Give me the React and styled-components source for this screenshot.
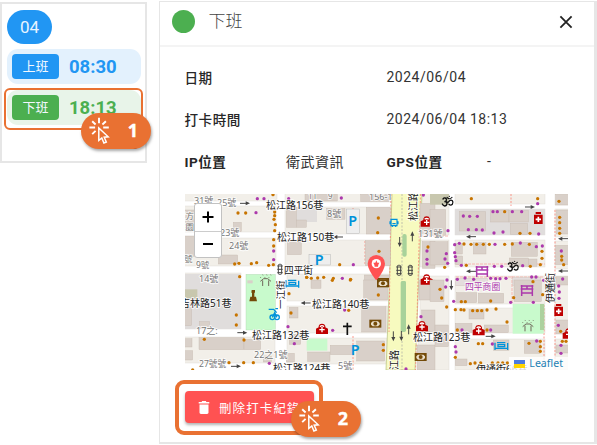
import React from "react";
import styled, { createGlobalStyle } from "styled-components";

const sans = `Roboto, "Noto Sans CJK TC", sans-serif`;

const Global = createGlobalStyle`
  * { box-sizing: border-box; }
  body { margin: 0; background: #fff; font-family: ${sans}; color: #272727; overflow: hidden; }
`;

const Page = styled.main`
  display: flex;
  align-items: flex-start;
  gap: 12px;
  width: 597px;
  height: 445px;
`;

const DayCard = styled.section`
  position: relative;
  width: 147px;
  height: 161px;
  margin-top: 2px;
  padding: 6px 4px 0 5px;
  border: 2px solid #e6e6e6;
  display: flex;
  flex-direction: column;
`;

const DayBadge = styled.div`
  width: 45px;
  height: 34px;
  border-radius: 17px;
  background: #2196f3;
  color: #e8f4ff;
  font-size: 17px;
  line-height: 34px;
  text-align: center;
`;

const PunchRow = styled.div`
  display: flex;
  align-items: center;
  height: 35px;
  margin-top: ${(p) => p.$gap}px;
  padding-left: 5px;
  gap: 10px;
  border-radius: 11px;
  background: ${(p) => p.$tint};
  color: ${(p) => p.$color};
`;

const PunchTag = styled.span`
  width: 47px;
  height: 25px;
  border-radius: 4px;
  background: ${(p) => p.$color};
  color: #f2f8ff;
  font-size: 13px;
  line-height: 25px;
  text-align: center;
`;

const PunchTime = styled.span`
  font-size: 18.5px;
  font-weight: 700;
  line-height: 24px;
`;

const Total = styled.div`
  margin: 8px 2px 0 0;
  text-align: right;
  font-size: 17px;
  line-height: 20px;
`;

const Highlight = styled.div`
  position: absolute;
  left: ${(p) => p.$x}px;
  top: ${(p) => p.$y}px;
  width: ${(p) => p.$w}px;
  height: ${(p) => p.$h}px;
  border: ${(p) => p.$line}px solid #e97132;
  border-radius: ${(p) => p.$r}px;
`;

const Callout = styled.div`
  position: absolute;
  left: ${(p) => p.$x}px;
  top: ${(p) => p.$y}px;
  width: 70px;
  height: 36px;
  padding: 0 13px 0 8px;
  border-radius: 18px;
  background: #e97132;
  color: #fff;
  display: flex;
  align-items: center;
  justify-content: space-between;
  font: 700 18px "Open Sans", sans-serif;
  box-shadow: 1px 2px 3px rgba(0, 0, 0, 0.35);
  svg { margin-top: -2px; }
`;

const CalloutNumber = styled.span`
  margin-top: -2px;
  -webkit-text-stroke: 0.4px #fff;
`;

const Dialog = styled.section`
  position: relative;
  width: 438px;
  height: 443px;
  margin-top: 1px;
  border: 2px solid #e6e6e6;
  border-top-width: 1px;
  border-left-width: 1px;
  border-right-width: 3px;
`;

const DialogHeader = styled.header`
  display: flex;
  align-items: center;
  height: 45px;
  padding: 0 21px 4px 12px;
  border-bottom: 2px solid #f4f4f4;
`;

const StatusDot = styled.span`
  width: 23px;
  height: 23px;
  border-radius: 50%;
  background: #4caf50;
`;

const Title = styled.h1`
  flex: 1;
  margin: -2px 0 0 13.5px;
  font-size: 17px;
  font-weight: 300;
  line-height: 24px;
  color: #444;
`;

const Fields = styled.dl`
  display: grid;
  grid-template-columns: 101.5px 100.5px 100.5px 1fr;
  grid-auto-rows: 42px;
  align-items: center;
  margin: 0;
  padding: 9px 0 0 24.5px;
  font-size: 14px;
  letter-spacing: 0.5px;
`;

const Label = styled.dt`
  font-size: 13.6px;
  font-weight: ${(p) => (p.$strong ? 700 : 500)};
`;

const Value = styled.dd`
  margin: 0;
  grid-column: ${(p) => (p.$wide ? "3 / 5" : "auto")};
  color: #333;
`;

const MapFrame = styled.div`
  width: 383px;
  height: 176px;
  margin: 12px 0 0 25px;
  overflow: hidden;
  svg { display: block; }
`;

const MapView = styled.div`
  position: relative;
  width: 383px;
  height: 176px;
`;

const ZoomControl = styled.div`
  position: absolute;
  left: 9px;
  top: 9px;
  width: 28px;
  height: 55px;
  border: 1px solid #c2c2c2;
  border-radius: 3px;
  background: #fff;
  display: grid;
  grid-template-rows: 1fr 1fr;
`;

const ZoomButton = styled.button`
  display: grid;
  place-items: center;
  padding: 0;
  border: 0;
  background: none;
  & + & { border-top: 1px solid #ccc; }
`;

const Attribution = styled.div`
  position: absolute;
  right: 0;
  bottom: 0;
  height: 13px;
  padding: 0 5px;
  display: flex;
  align-items: center;
  gap: 4px;
  background: rgba(255, 255, 255, 0.8);
  color: #2381b4;
  font: 10.6px/13px "Noto Sans", sans-serif;
`;

const DeleteButton = styled.button`
  display: flex;
  align-items: center;
  gap: 8px;
  width: 129px;
  height: 32px;
  margin: 21px 0 0 25px;
  padding: 0 0 0 12px;
  border: 0;
  border-radius: 4px;
  background: #ff5252;
  color: #fff;
  font: 400 12.5px ${sans};
  letter-spacing: 1.1px;
  white-space: nowrap;
  overflow: hidden;
  box-shadow: 0 2px 3px rgba(0, 0, 0, 0.3);
`;

const ClickIcon = () => (
  <svg width="22" height="27" viewBox="0 0 22 27" fill="none" stroke="#fff">
    <path d="M10 .8v5.5M3.2 4.2l3.4 3.3M16.9 4.2l-3.5 3.3M.4 10.5h5.7M14.2 10.5h5.6M3.2 17.2l3.4-3.4" strokeWidth="1.9" />
    <path d="M9.8 10.9v12.6l3-2.5 2.1 5 2.4-1-2.1-4.8 4-.4z" strokeWidth="1.5" />
  </svg>
);

const BIN = "M5.6 2h1l.6-1h3.6l.6 1h2.9v1.6H3.7V2zM4.5 4.6h9v8c0 .9-.6 1.4-1.4 1.4H5.9c-.8 0-1.4-.5-1.4-1.4z";

/* Street map: every tile is drawn at three units per map pixel. */
const Tile = ({ x, y, children }) => (
  <g transform={`translate(${x} ${y}) scale(.33333)`}>{children}</g>
);

const Rects = ({ list, ...rest }) => (
  <g {...rest}>
    {list.map(([x, y, w, h], i) => <rect key={i} x={x} y={y} width={w} height={h} />)}
  </g>
);

const Dots = ({ list, purple }) => (
  <g fill={purple ? "#ac39ac" : "#c77400"}>
    {list.map(([x, y], i) => <circle key={i} cx={x} cy={y} r="4.9" />)}
  </g>
);

const T = ({ x, y, size = 10, fill = "#222", rotate, halo = 1.8, children, ...rest }) => (
  <text
    x={x} y={y} fontSize={size} fill={fill} stroke="#fff" strokeWidth={halo} strokeOpacity=".75"
    paintOrder="stroke" fontFamily='"Noto Sans", "Noto Sans CJK TC", sans-serif'
    transform={rotate ? `rotate(${rotate} ${x} ${y})` : undefined} {...rest}
  >{children}</text>
);

const Arrow = ({ x, y, r = 0, len = 30 }) => (
  <g transform={`translate(${x} ${y}) rotate(${r})`}>
    <path d={`M${-len / 2} 0H${len / 2 - 8}`} stroke="#444" strokeWidth="3" />
    <path d={`M${len / 2} 0l-13-6v12z`} fill="#444" />
  </g>
);

const Clinic = ({ x, y }) => (
  <g transform={`translate(${x} ${y})`}>
    <path d="M-18 16V0L-10-4V-8Q-8-15 0-15T10-8V-4L18 0V16z" fill="#bf0000" />
    <path d="M-6-6Q0-12 6-6M0-5V11M-8 3H8" stroke="#fff" strokeWidth="4" fill="none" />
  </g>
);

const Pharmacy = ({ x, y }) => (
  <g transform={`translate(${x} ${y})`}>
    <path d="M-8-18H8v6H-8zM-13-10h26v28h-26z" fill="#bf0000" />
    <path d="M0-4v16M-8 4H8" stroke="#fff" strokeWidth="5" />
  </g>
);

const Bank = ({ x, y }) => (
  <g transform={`translate(${x} ${y})`}>
    <rect x="-18" y="-12" width="36" height="24" fill="#734a08" />
    <path d="M-13-2l5-5H8l5 5V3L8 8H-8l-5-5z" fill="#eadfca" />
    <circle r="6" fill="#734a08" />
  </g>
);

const Gate = ({ x, y }) => (
  <path transform={`translate(${x} ${y})`} d="M-16-17V16M16-17V16M-19-14H19M-19-5H19M-14 7H14M0-14V-5" stroke="#ac39ac" strokeWidth="4.5" fill="none" />
);

const Bed = ({ x, y }) => (
  <path transform={`translate(${x} ${y})`} d="M-19-11V11M-19 6H19M19-10V11M-10-5h20v6h-20zM-13-11h25" stroke="#0092da" strokeWidth="4" fill="none" />
);

const Signal = ({ x, y }) => (
  <g transform={`translate(${x} ${y})`} fill="none" stroke="#444" strokeWidth="3">
    <rect x="-5" y="-15" width="10" height="30" rx="3" /><path d="M-8-10H8M-8 0H8M-8 10H8" />
  </g>
);

const Shelter = ({ x, y }) => (
  <g transform={`translate(${x} ${y})`} stroke="#70675b" strokeWidth="3" fill="none">
    <path d="M-16 2L-6-6H6L16 2M-9-1V16M9-1V16" />
    <path d="M-16-11l1 2M-9-18l1 2M-3-11l1 2M3-18l1 2M9-11l1 2M15-18l1 2" />
  </g>
);

const Om = ({ x, y }) => (
  <g transform={`translate(${x} ${y})`} stroke="#111" strokeWidth="4" fill="none" strokeLinecap="round">
    <path d="M-14-8Q-11-12-8-11Q-2-9-4-4Q-6 0-10 0Q-2 0-2 6Q-3 13-9 13Q-14 12-16 7" />
    <path d="M-4 0Q1 4 4-1Q9-7 14-3Q18 2 14 8Q9 13 4 8" />
    <path d="M-2-13Q5-5 13-13M5-16v.5" strokeWidth="3.2" />
  </g>
);

const StreetMap = () => (
  <svg width="383" height="176" viewBox="185 194 383 176">
    <rect x="185" y="194" width="383" height="176" fill="#fff" />
    <Rects fill="#f2efe9" stroke="#ddd8d0" strokeWidth=".4" list={[
      [184, 193, 93, 8], [184, 206, 92, 26], [184, 238, 92, 28], [184, 273, 57, 27], [184, 300, 57, 29],
      [184, 337, 91, 26], [285, 193, 107, 9], [285, 207, 107, 27], [285, 240, 107, 26], [287, 274, 103, 27],
      [287, 306, 101, 27], [287, 338, 100, 26], [421, 193, 28, 42], [420, 240, 29, 27], [420, 276, 29, 57],
      [418, 339, 31, 31], [455, 193, 90, 11], [455, 209, 90, 26], [455, 240, 90, 27], [455, 276, 90, 28],
      [455, 308, 90, 25], [455, 339, 90, 31], [555, 193, 14, 12], [555, 209, 14, 28], [555, 241, 14, 28],
      [555, 276, 14, 57], [555, 339, 14, 31],
    ]} />
    <Rects fill="#e0dddc" list={[[185, 274, 56, 55], [455, 209, 90, 26], [287, 207, 30, 15]]} />
    <path d="M392 193h30q-3 85-7 177h-29q4-90 6-177z" fill="#f7fabf" stroke="#bec687" strokeWidth=".8" />
    <path d="M402 194v176" stroke="#a0a0a0" strokeWidth=".6" strokeDasharray="2 1.5" />
    <path d="M391 194l-2 138M420.5 194l-5 176M555 210v160M365 241v24M353 208v25M544 305v60M353 336v34M511 194v12" stroke="#fa8072" strokeWidth=".8" strokeDasharray="2 1.5" fill="none" />
    <path d="M421 236h28M456 264h89M456 277h89M512 276v28" stroke="#f6b6b1" strokeWidth="1" strokeDasharray="3 1" />

    <Tile x={180} y={190}>
      <Rects fill="#d9d0c9" stroke="#c6b9ae" strokeWidth="1.2" list={[[14, 60, 30, 60], [160, 97, 24, 28], [14, 138, 30, 62], [115, 195, 58, 27], [319, 52, 30, 60], [349, 90, 30, 22], [322, 150, 42, 44]]} />
      <rect x="198" y="253" width="88" height="167" fill="#c8facc" stroke="#a8cda8" />
      <rect x="202" y="271" width="16" height="9" fill="#d9d0c9" />
      <Dots list={[[174, 69], [197, 69], [284, 66], [284, 77], [282, 88], [286, 104], [284, 122], [281, 149], [281, 168], [164, 222], [177, 220], [214, 221], [230, 218], [266, 226], [280, 224], [179, 260], [279, 14], [380, 262]]} />
      <Dots purple list={[[232, 26], [252, 26], [228, 68], [281, 183], [281, 209], [326, 26]]} />
      <Arrow x={195} y={40} />
      <Shelter x={257} y={272} />
      <Signal x={300} y={238} />
      <Bed x={337} y={282} />
    </Tile>
    <Tile x={180} y={280}>
      <Rects fill="#d9d0c9" stroke="#c6b9ae" strokeWidth="1.2" list={[[14, 82, 21, 55], [58, 125, 30, 20], [57, 173, 135, 36], [192, 178, 50, 31], [14, 176, 22, 25], [14, 212, 24, 28], [328, 82, 26, 32], [328, 163, 34, 30], [319, 220, 24, 26], [250, 228, 24, 18]]} />
      <rect x="14" y="28" width="38" height="27" fill="#c8c7ae" />
      <Dots list={[[169, 105], [169, 135], [73, 178], [192, 180], [147, 248], [191, 248], [220, 248], [327, 41], [333, 99], [38, 270]]} />
      <Dots purple list={[[324, 140], [343, 191], [268, 250]]} />
      <Arrow x={187} y={158} /><Arrow x={168} y={259} /><Arrow x={377} y={69} r={180} />
      <path d="M215 30h10v8h-2v12h5l3 14h-23l3-14h5V38h-2z" fill="#734a08" />
      <g stroke="#0092da" strokeWidth="4" fill="none"><circle cx="277" cy="112" r="7" /><circle cx="291" cy="112" r="7" /><path d="M277 112l7-14 7 14M266 88h15l9 10M286 86h8" /></g>
    </Tile>
    <Tile x={305} y={190}>
      <Rects fill="#d9d0c9" stroke="#c6b9ae" strokeWidth="1.2" list={[[0, 13, 97, 20], [167, 13, 85, 22], [65, 55, 55, 33], [184, 52, 72, 80], [181, 152, 75, 75], [345, 40, 45, 90], [352, 155, 38, 80], [178, 255, 76, 30]]} />
      <Rects fill="#eee" stroke="#aaa" strokeWidth="1.2" list={[[124, 57, 40, 74], [12, 194, 64, 31]]} />
      <g fill="#a8d29a"><rect x="292" y="132" width="13" height="68" rx="6" /><rect x="290" y="273" width="13" height="20" rx="6" /></g>
      <Dots list={[[220, 84], [218, 128], [222, 184], [104, 224], [5, 262], [19, 265], [38, 264], [56, 262], [85, 265], [137, 268], [369, 171]]} />
      <Dots purple list={[[109, 24], [145, 224], [112, 265], [366, 183], [366, 208], [366, 222], [355, 15]]} />
      <g fill="#0092da" fontFamily="Noto Sans" fontWeight="600" fontSize="43"><text x="130" y="109">P</text><text x="29" y="225">P</text></g>
      <path d="M258 88h18v19h-18zM262 107v4M272 107v4M255 94v9M279 94v9M262 101h10" fill="none" stroke="#0092da" strokeWidth="3.5" />
      <Arrow x={99} y={141} r={180} /><Arrow x={284} y={156} r={90} /><Arrow x={322} y={139} r={-90} />
      <Signal x={282} y={241} /><Signal x={316} y={241} />
      <Clinic x={365} y={94} /><Clinic x={365} y={272} />
      <Bank x={234} y={276} />
      <path d="M214 272q-26-34-26-51a26 26 0 0 1 52 0q0 17-26 51z" fill="#ff5252" />
      <circle cx="214" cy="221" r="14" fill="#fff" /><path d="M214 211l3 7h6l-3 6-1 6h-10l-1-6-3-6h6z" fill="#ff5252" />
    </Tile>
    <Tile x={305} y={280}>
      <Rects fill="#d9d0c9" stroke="#c6b9ae" strokeWidth="1.2" list={[[18, 0, 30, 25], [176, 0, 72, 60], [170, 80, 73, 76], [76, 196, 67, 28], [8, 216, 67, 28], [155, 183, 84, 60], [342, 0, 48, 60], [350, 90, 40, 65], [336, 195, 54, 75]]} />
      <rect x="5" y="176" width="62" height="36" fill="#c8facc" />
      <rect x="287" y="3" width="16" height="153" rx="5" fill="#a8d29a" />
      <Dots list={[[220, 45], [131, 91], [235, 194], [235, 211], [82, 1], [136, 0]]} />
      <Dots purple list={[[119, 90], [83, 151], [348, 110], [303, 267]]} />
      <Bank x={211} y={131} /><Bank x={347} y={231} /><Bank x={234} y={10} />
      <Clinic x={51} y={146} /><Clinic x={351} y={138} /><Clinic x={365} y={-2} />
      <path d="M127 128v37M114 139h26" stroke="#111" strokeWidth="5" />
      <text x="137" y="226" fill="#0092da" fontFamily="Noto Sans" fontWeight="600" fontSize="43">P</text>
      <Arrow x={265} y={169} r={90} /><Arrow x={289} y={168} r={90} /><Arrow x={311} y={148} r={-90} />
    </Tile>
    <Tile x={430} y={190}>
      <rect x="0" y="12" width="57" height="32" fill="#c8c7ae" />
      <Rects fill="#d9d0c9" stroke="#c6b9ae" strokeWidth="1.2" list={[[0, 58, 47, 78], [0, 155, 54, 70], [88, 65, 79, 58], [182, 60, 55, 36], [237, 62, 58, 34], [241, 100, 52, 33], [130, 158, 38, 34], [244, 157, 78, 42], [77, 160, 20, 32], [75, 198, 23, 25], [238, 204, 57, 25], [295, 207, 26, 22], [377, 13, 38, 32], [379, 60, 36, 72], [377, 166, 38, 58], [378, 260, 37, 25]]} />
      <Rects fill="#e4dddd" stroke="#c6b9ae" strokeWidth="1" list={[[77, 265, 95, 22], [248, 262, 84, 24]]} />
      <Dots list={[[124, 26], [323, 26], [224, 65], [270, 130], [300, 130], [102, 162], [123, 163], [140, 163], [160, 163], [178, 163], [224, 163], [247, 162], [298, 163], [336, 184], [336, 205], [331, 224], [301, 229], [109, 226], [44, 232], [389, 82], [389, 98], [389, 115], [389, 130], [395, 199], [395, 210], [401, 224], [310, 276], [259, 275], [387, 34]]} />
      <Dots purple list={[[323, 41], [100, 78], [119, 79], [142, 79], [189, 65], [202, 65], [247, 65], [275, 65], [115, 119], [139, 119], [157, 120], [192, 129], [219, 126], [326, 132], [54, 122], [74, 164], [88, 160], [195, 163], [271, 159], [319, 170], [337, 168], [74, 188], [76, 200], [78, 212], [94, 226], [193, 229], [215, 229], [278, 227], [49, 191], [45, 207], [53, 220], [394, 183], [51, 270], [82, 268], [105, 264], [131, 268], [182, 265], [197, 266], [210, 266], [228, 265], [305, 261], [318, 261], [341, 271], [398, 267]]} />
      <Arrow x={300} y={51} /><Arrow x={123} y={140} r={180} /><Arrow x={123} y={244} r={180} /><Arrow x={399} y={146} r={180} /><Arrow x={399} y={243} r={180} />
      <Pharmacy x={325} y={84} /><Gate x={156} y={245} />
      <Om x={53} y={35} /><Om x={249} y={230} />
    </Tile>
    <Tile x={430} y={280}>
      <Rects fill="#d9d0c9" stroke="#c6b9ae" strokeWidth="1.2" list={[[0, 0, 42, 65], [15, 135, 40, 65], [80, 38, 60, 30], [145, 40, 76, 29], [252, 0, 82, 65], [117, 88, 45, 29], [76, 130, 50, 28], [163, 135, 72, 23], [190, 180, 47, 31], [283, 181, 48, 39], [76, 237, 35, 20], [378, 120, 37, 42], [378, 195, 37, 24]]} />
      <rect x="248" y="72" width="93" height="89" fill="#c8facc" /><rect x="330" y="72" width="13" height="78" fill="#add19e" />
      <Dots list={[[30, 28], [35, 54], [50, 81], [94, 65], [106, 65], [182, 63], [76, 89], [93, 89], [102, 90], [128, 92], [142, 92], [155, 92], [171, 90], [198, 87], [231, 126], [82, 150], [171, 150], [145, 191], [158, 191], [76, 232], [121, 251], [135, 249], [152, 249], [187, 249], [204, 249], [218, 249], [232, 249], [297, 190], [331, 184], [331, 200], [331, 214], [397, 184], [408, 184], [251, 53], [388, 92], [309, 5], [338, 44], [392, 154]]} />
      <Dots purple list={[[47, 21], [71, 64], [242, 67], [310, 67], [96, 150], [182, 150], [187, 192], [76, 200], [78, 216], [320, 183], [386, 18], [388, 36], [387, 55], [385, 136], [393, 196], [393, 220]]} />
      <Arrow x={64} y={16} r={90} /><Arrow x={182} y={169} />
      <Pharmacy x={386} y={90} /><Clinic x={146} y={150} /><Clinic x={416} y={160} /><Gate x={291} y={32} /><Shelter x={294} y={138} /><Bed x={214} y={199} />
    </Tile>

    <g>
      <T x={194} y={204} size={9} fill="#777">31號</T><T x={217} y={205.5} size={9} fill="#777">25號</T>
      <T x={220} y={236} size={9} fill="#777">23號</T><T x={229} y={249} size={9} fill="#777">24號</T>
      <T x={177} y={219} size={8.5} fill="#777">東方</T><T x={177} y={230} size={8.5} fill="#777">花園</T>
      <T x={184} y={262} size={8.5} fill="#777">號</T><T x={196} y={268} size={8.5} fill="#777">9號</T><T x={199} y={282} size={9} fill="#777">14號</T>
      <T x={196} y={334} size={9} fill="#777">17之:</T><T x={254} y={358} size={9} fill="#777">22之1號</T><T x={199} y={367} size={8.6} fill="#777">27號號</T>
      <T x={327} y={217} size={9} fill="#777">8號</T><T x={369} y={200} size={9} fill="#777">156-1</T><T x={338} y={369} size={9} fill="#777">5號</T><T x={418} y={237} size={9} fill="#777">131號</T><T x={308} y={199} size={8} fill="#777">11</T><T x={328} y={199} size={8} fill="#777">9</T>
      <T x={266} y={208.5}>松江路156巷</T><T x={277} y={241}>松江路150巷</T><T x={284} y={274} size={9.7}>四平街</T>
      <T x={180} y={307}>吉林路51巷</T><T x={312} y={307.5}>松江路140巷</T><T x={252} y={339}>松江路132巷</T>
      <T x={273} y={371.5}>松江路124巷</T><T x={413} y={340.5}>松江路123巷</T>
      <T x={417} y={221} rotate={-90}>松江路</T><T x={398} y={380} rotate={-90}>松江路</T>
      <T x={284} y={309} rotate={-90} size={9.5}>一江街</T><T x={554} y={303} rotate={-90} size={10}>伊通街</T>
      <T x={465} y={290} fill="#ac39ac" size={8.8}>四平商圈</T><T x={476} y={373} size={10}>伊通街66巷</T>
    </g>
  </svg>
);

export default function App() {
  return (
    <>
      <Global />
      <Page>
        <DayCard>
          <DayBadge>04</DayBadge>
          <PunchRow $gap={5} $tint="#e3f1fd" $color="#2196f3">
            <PunchTag $color="#2196f3">上班</PunchTag><PunchTime>08:30</PunchTime>
          </PunchRow>
          <PunchRow $gap={6} $tint="#e8f4e9" $color="#4caf50">
            <PunchTag $color="#4caf50">下班</PunchTag><PunchTime>18:13</PunchTime>
          </PunchRow>
          <Total>9.13</Total>
          <Highlight $x={2} $y={83.5} $w={139} $h={42} $line={2} $r={6} />
          <Callout $x={79} $y={109}><ClickIcon /><CalloutNumber>1</CalloutNumber></Callout>
        </DayCard>
        <Dialog>
          <DialogHeader>
            <StatusDot />
            <Title>下班</Title>
            <svg width="14" height="14" viewBox="0 0 14 14" stroke="#222" strokeWidth="1.8"><path d="M1.4 1.4l11.2 11.2M12.6 1.4l-11.2 11.2" /></svg>
          </DialogHeader>
          <Fields>
            <Label>日期</Label><Value $wide>2024/06/04</Value>
            <Label>打卡時間</Label><Value $wide>2024/06/04 18:13</Value>
            <Label $strong>IP位置</Label><Value>衛武資訊</Value>
            <Label $strong>GPS位置</Label><Value>-</Value>
          </Fields>
          <MapFrame>
            <MapView>
              <StreetMap />
              <ZoomControl>
                <ZoomButton aria-label="zoom in"><svg width="12" height="12" stroke="#000" strokeWidth="2"><path d="M6 .5v11M.5 6h11" /></svg></ZoomButton>
                <ZoomButton aria-label="zoom out"><svg width="12" height="12" stroke="#000" strokeWidth="2"><path d="M1 6h10" /></svg></ZoomButton>
              </ZoomControl>
              <Attribution>
                <svg width="11" height="8"><rect width="11" height="4" fill="#4c7be1" /><rect y="4" width="11" height="4" fill="#ffd500" /></svg>
                Leaflet
              </Attribution>
            </MapView>
          </MapFrame>
          <DeleteButton>
            <svg width="14" height="15" viewBox="2 0 14 15" fill="#fff"><path d={BIN} /></svg>
            刪除打卡紀錄
          </DeleteButton>
          <Highlight $x={15} $y={378} $w={148} $h={55} $line={4} $r={9} />
          <Callout $x={131} $y={399}><ClickIcon /><CalloutNumber>2</CalloutNumber></Callout>
        </Dialog>
      </Page>
    </>
  );
}
